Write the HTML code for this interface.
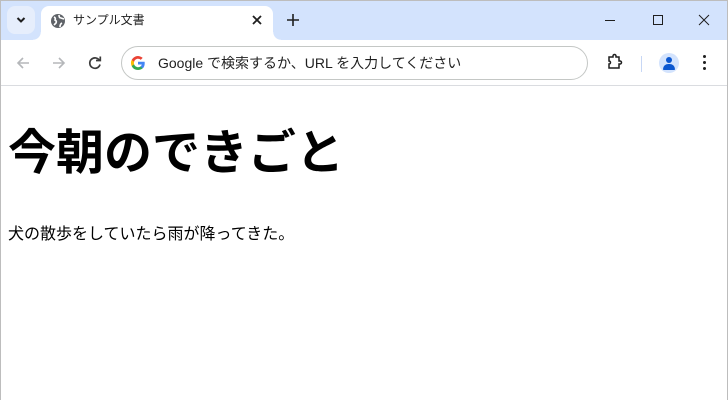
<!DOCTYPE html>
<html><head><meta charset="utf-8"><style>
*{margin:0;padding:0;box-sizing:border-box}
body{width:728px;height:400px;overflow:hidden;background:#fff;font-family:"Liberation Sans","Noto Sans CJK JP",sans-serif;position:relative}
.frame{position:absolute;inset:0;border:1px solid #bdbdbd;border-bottom:none;pointer-events:none;z-index:10}
.tabbar{position:absolute;left:0;top:0;width:728px;height:40px;background:#d3e3fd}
.tab{position:absolute;left:41px;top:6px;width:232px;height:34px;background:#fff;border-radius:8px 8px 0 0}
.tab:before,.tab:after{content:"";position:absolute;bottom:0;width:8px;height:8px}
.tab:before{left:-8px;background:radial-gradient(circle at 0 0,transparent 7.5px,#fff 8px)}
.tab:after{right:-8px;background:radial-gradient(circle at 100% 0,transparent 7.5px,#fff 8px)}
.dd{position:absolute;left:7px;top:6px;width:28px;height:28px;border-radius:8px;background:#e6eefc}
.toolbar{position:absolute;left:0;top:40px;width:728px;height:46px;background:#fff;border-bottom:1px solid #dadce0}
.omni{position:absolute;left:121px;top:6px;width:467px;height:34px;border:1px solid #c4c7c5;border-radius:17px;background:#fff}
.abs{position:absolute}
h1{position:absolute;left:8px;top:124px;font-size:48px;font-weight:bold;line-height:60px;color:#000;letter-spacing:0}
p{position:absolute;left:8px;top:224px;font-size:16px;line-height:22px;color:#000}
</style></head><body>
<div class="tabbar">
 <div class="dd"><svg class="abs" style="left:8px;top:9px" width="12" height="10"><path d="M2.5 3 L6 6.5 L9.5 3" stroke="#1f1f1f" stroke-width="2" fill="none"/></svg></div>
 <div class="tab">
  <svg class="abs" style="left:9px;top:7px" width="16" height="16" viewBox="0 0 16 16"><circle cx="8" cy="8" r="7" fill="#5f6368"/><path d="M4 4 Q6 5 5 7 Q7 8 6 10 L4 12 M9 2 Q9 5 11 5 L14 6 M10 14 Q10 11 12 10" stroke="#fff" stroke-width="1.6" fill="none"/></svg>
  <span class="abs" style="left:32px;top:6px;font-size:12px;line-height:16px;color:#1f1f1f">サンプル文書</span>
  <svg class="abs" style="left:210px;top:8px" width="12" height="12"><path d="M2 2 L10 10 M10 2 L2 10" stroke="#1f1f1f" stroke-width="1.8"/></svg>
 </div>
 <svg class="abs" style="left:286px;top:13px" width="14" height="14"><path d="M7 1 V13 M1 7 H13" stroke="#1f1f1f" stroke-width="1.6"/></svg>
 <svg class="abs" style="left:604px;top:14px" width="12" height="12"><path d="M1 6.5 H11" stroke="#1f1f1f" stroke-width="1"/></svg>
 <svg class="abs" style="left:652px;top:14px" width="12" height="12"><rect x="1.5" y="1.5" width="9" height="9" fill="none" stroke="#1f1f1f" stroke-width="1"/></svg>
 <svg class="abs" style="left:698px;top:14px" width="12" height="12"><path d="M1 1 L11 11 M11 1 L1 11" stroke="#1f1f1f" stroke-width="1"/></svg>
</div>
<div class="toolbar">
 <svg class="abs" style="left:15px;top:15px" width="16" height="16"><path d="M14 8 H3 M8 3 L3 8 L8 13" stroke="#b5b7ba" stroke-width="1.6" fill="none"/></svg>
 <svg class="abs" style="left:51px;top:15px" width="16" height="16"><path d="M2 8 H13 M8 3 L13 8 L8 13" stroke="#b5b7ba" stroke-width="1.6" fill="none"/></svg>
 <svg class="abs" style="left:87px;top:15px" width="16" height="16"><path d="M12.5 5.5 A5.2 5.2 0 1 0 13 9.5" stroke="#3c3c3c" stroke-width="1.7" fill="none"/><path d="M9 5.5 H13.3 V1.5" stroke="#3c3c3c" stroke-width="1.7" fill="none"/></svg>
 <div class="omni">
  <svg class="abs" style="left:8px;top:8px" width="16" height="16" viewBox="0 0 16 16"><path d="M14.7 8.2c0-.5 0-1-.1-1.4H8v2.7h3.8a3.3 3.3 0 0 1-1.4 2.1v1.8h2.3c1.3-1.2 2-3 2-5.2z" fill="#4285f4"/><path d="M8 15c1.9 0 3.5-.6 4.700-1.7l-2.3-1.8c-.6.4-1.4.7-2.4.7-1.8 0-3.4-1.200-3.9-2.9H1.7v1.8A7 7 0 0 0 8 15z" fill="#34a853"/><path d="M4.1 9.3a4.2 4.2 0 0 1 0-2.6V4.9H1.7a7 7 0 0 0 0 6.2z" fill="#fbbc05"/><path d="M8 3.8c1 0 2 .4 2.7 1.1l2-2A7 7 0 0 0 1.7 4.9l2.4 1.8C4.6 5 6.2 3.8 8 3.8z" fill="#ea4335"/></svg>
  <span class="abs" style="left:36px;top:7px;font-size:14px;line-height:18px;color:#1f1f1f">Google で検索するか、URL を入力してください</span>
 </div>
 <svg class="abs" style="left:606px;top:13px" width="18" height="18"><path d="M3 4 H7 V3 A1.5 1.5 0 0 1 10 3 V4 H13 V8 H14 A1.5 1.5 0 0 1 14 11 H13 V15 H3 V11 A1.5 1.5 0 0 0 3 8 Z" stroke="#1f1f1f" stroke-width="1.5" fill="none"/></svg>
 <div class="abs" style="left:641px;top:16px;width:1px;height:16px;background:#c7d7f5"></div>
 <div class="abs" style="left:659px;top:13px;width:20px;height:20px;border-radius:50%;background:#d3e3fd;overflow:hidden">
  <div class="abs" style="left:7px;top:4px;width:6px;height:6px;border-radius:50%;background:#0b57d0"></div>
  <div class="abs" style="left:4px;top:11px;width:12px;height:6px;border-radius:6px 6px 1px 1px;background:#0b57d0"></div>
 </div>
 <div class="abs" style="left:703px;top:15px;width:3px;height:3px;border-radius:50%;background:#1f1f1f"></div>
 <div class="abs" style="left:703px;top:21px;width:3px;height:3px;border-radius:50%;background:#1f1f1f"></div>
 <div class="abs" style="left:703px;top:27px;width:3px;height:3px;border-radius:50%;background:#1f1f1f"></div>
</div>
<h1>今朝のできごと</h1>
<p>犬の散歩をしていたら雨が降ってきた。</p>
<div class="frame"></div>
</body></html>
